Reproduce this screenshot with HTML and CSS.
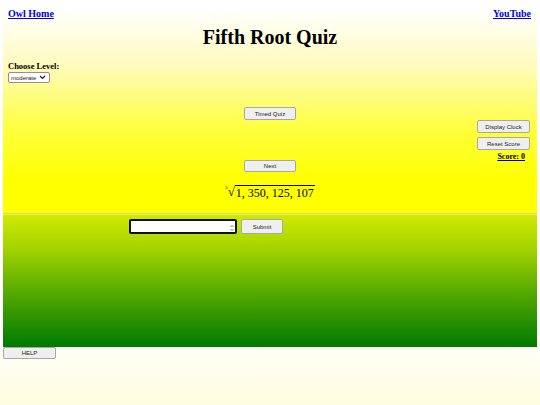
FILE: index.html
```html
<!DOCTYPE html>
<html lang="en">
<head>
    <meta charset="UTF-8">
    <title>Fifth Root Quiz</title>
    <link rel="stylesheet" href="styles.css">
</head>
<body>
    <div class="page">
        <div class="top">
            <div class="nav">
                <a href="#" class="nav-link">Owl Home</a>
                <a href="#" class="nav-link">YouTube</a>
            </div>
            <h1 class="title">Fifth Root Quiz</h1>

            <div class="level">
                <div class="level-label">Choose Level:</div>
                <div class="select">moderate
                    <svg width="7" height="5" viewBox="0 0 7 5"><path d="M1 1 L3.5 3.5 L6 1" fill="none" stroke="#222" stroke-width="1.2"/></svg>
                </div>
            </div>

            <div class="quiz-area">
                <div></div>
                <div class="center-col">
                    <button class="btn btn-wide">Timed Quiz</button>
                    <button class="btn btn-wide next">Next</button>
                    <div class="root">
                        <span class="root-index">5</span><span class="root-sign">√</span><span class="radicand">1, 350, 125, 107</span>
                    </div>
                </div>
                <div class="side-col">
                    <button class="btn btn-side">Display Clock</button>
                    <button class="btn btn-side">Reset Score</button>
                    <a href="#" class="score">Score: 0</a>
                </div>
            </div>
        </div>

        <div class="divider"></div>

        <div class="bottom">
            <div class="answer-row">
                <div class="answer">
                    <span class="spin">
                        <svg width="4" height="8" viewBox="0 0 4 8"><path d="M0.5 3 L2 1.5 L3.5 3 M0.5 5 L2 6.5 L3.5 5" fill="none" stroke="#555" stroke-width="0.8"/></svg>
                    </span>
                </div>
                <button class="btn submit">Submit</button>
            </div>
        </div>
        <button class="btn help">HELP</button>
    </div>
</body>
</html>
```

FILE: styles.css
```css
* {
    box-sizing: border-box;
}

html, body {
    height: 100%;
}

body {
    margin: 0;
    font-family: 'Liberation Serif', serif;
    background: linear-gradient(#ffffff 80%, #fffde0 100%);
}

.page {
    margin: 0 3px;
}

.top {
    height: 213px;
    padding: 0 5px;
    background: linear-gradient(#ffffff 4%, #fffbc0 30%, #ffff40 60%, #ffff00 85%);
}

.nav {
    display: flex;
    justify-content: space-between;
    padding-top: 8px;
    padding-right: 1px;
}

.nav-link {
    color: #0000ee;
    font-weight: bold;
    font-size: 10px;
}

.title {
    margin: 6px 0 0;
    text-align: center;
    font-size: 20px;
    line-height: 24px;
}

.level {
    margin-top: 12px;
}

.level-label {
    font-weight: bold;
    font-size: 8.5px;
    line-height: 10px;
}

.select {
    margin-top: 1px;
    width: 42px;
    height: 11px;
    display: flex;
    align-items: center;
    justify-content: space-between;
    padding: 0 3px 0 2px;
    background: #fff;
    border: 1px solid #8f8f8f;
    border-radius: 2px;
    font-family: 'Liberation Sans', sans-serif;
    font-size: 6px;
    color: #222;
}

.quiz-area {
    display: grid;
    grid-template-columns: 1fr auto 1fr;
    margin-top: 24px;
}

.center-col {
    display: flex;
    flex-direction: column;
    align-items: center;
}

.btn {
    font-family: 'Liberation Sans', sans-serif;
    font-size: 6px;
    color: #222;
    background: #efefef;
    border: 1px solid #a8a8a8;
    border-radius: 2px;
    padding: 0;
    cursor: pointer;
}

.btn-wide {
    width: 52px;
    height: 13px;
}

.next {
    margin-top: 40px;
    height: 12px;
}

.root {
    margin-top: 12px;
    display: flex;
    align-items: flex-start;
    font-size: 12px;
    line-height: 14px;
}

.root-index {
    font-size: 5px;
    line-height: 5px;
    margin-top: 1px;
}

.root-sign {
    font-size: 13px;
    line-height: 15px;
}

.radicand {
    border-top: 1px solid #000;
    margin-top: 1px;
    padding: 0 1px;
}

.side-col {
    display: flex;
    flex-direction: column;
    align-items: flex-end;
    padding-top: 13px;
    padding-right: 2px;
}

.btn-side {
    width: 53px;
    height: 13px;
    margin-bottom: 4px;
}

.score {
    color: #000;
    font-weight: bold;
    font-size: 8px;
    line-height: 8px;
    margin-right: 5px;
    margin-top: -1px;
}

.divider {
    height: 2px;
    background: #d9d96a;
    border-bottom: 1px solid #eef05a;
}

.bottom {
    height: 132px;
    background: linear-gradient(#d0ea00 0%, #a4d400 25%, #52a800 60%, #007a00 100%);
}

.answer-row {
    display: flex;
    gap: 4px;
    padding-left: 126px;
    padding-top: 4px;
}

.answer {
    width: 108px;
    height: 15px;
    background: #fff;
    border: 2px solid #111;
    border-radius: 2px;
    display: flex;
    justify-content: flex-end;
    align-items: center;
    padding-right: 1px;
}

.submit {
    width: 42px;
    height: 15px;
}

.help {
    display: block;
    width: 53px;
    height: 12px;
}
```
